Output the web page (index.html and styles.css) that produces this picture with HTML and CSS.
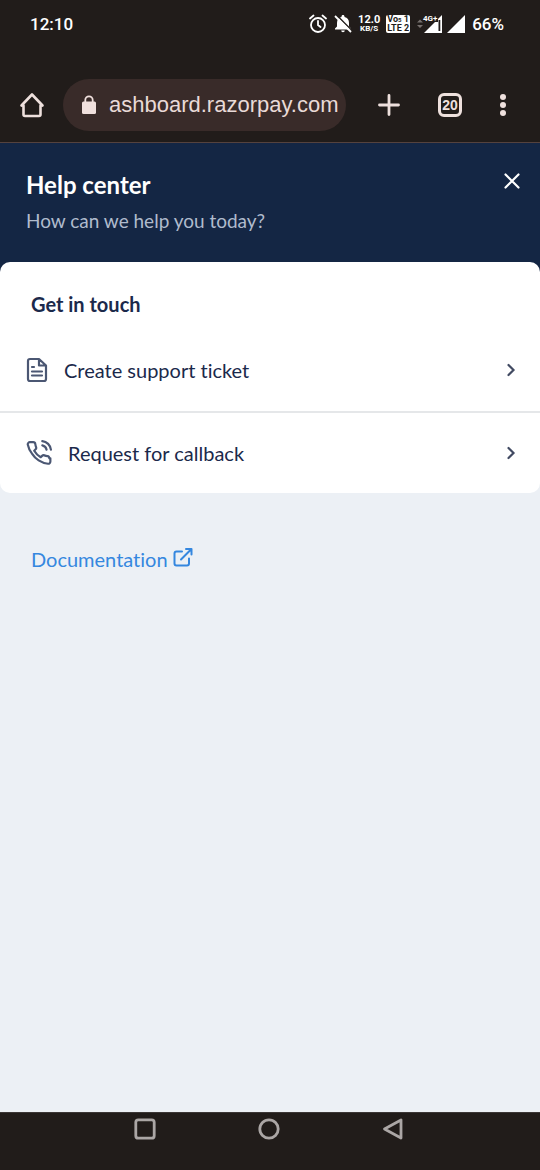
FILE: index.html
```html
<!DOCTYPE html>
<html lang="en">
<head>
<meta charset="utf-8">
<meta name="viewport" content="width=device-width, initial-scale=1">
<title>Help center</title>
<link rel="stylesheet" href="styles.css">
</head>
<body>
<div class="screen">
  <div class="status">
    <time class="clock">12:10</time>
    <div class="indicators">
      <svg width="18" height="20" viewBox="0 0 18 20" fill="none" stroke="#fff" stroke-linecap="round"><circle cx="9" cy="11" r="7" stroke-width="1.800"/><path d="M9 7v4l2.500 2M1 4.500l3.500-3M17 4.500l-3.500-3" stroke-width="1.800"/></svg>
      <svg width="18" height="18" viewBox="0 0 18 18"><path fill="#fff" d="M9 0c.9 0 1.500.6 1.500 1.500v.6C13.500 2.700 15 5 15 8v3.500l2 2v1H1v-1l2-2V8c0-3 1.500-5.300 4.500-5.900v-.6C7.500.6 8.100 0 9 0zM7.200 15.500h3.600a1.800 1.800 0 0 1-3.600 0z"/><path d="M2.800 .3l15 15" stroke="#211c1a" stroke-width="1.500"/><path d="M1 1l16 16" stroke="#fff" stroke-width="1.800"/></svg>
      <div class="rate"><span class="rate-value">12.0</span><span>KB/S</span></div>
      <div class="volte"><span>Vo<small>5</small> 1</span><span>LTE 2</span></div>
      <div class="signals">
        <svg width="26" height="20" viewBox="0 0 26 20"><path fill="#77716f" d="M0 8.500l3-3 3 3zM0 11h6l-3 3z"/><path fill="#fff" d="M7 19L25 1v18z"/><path fill="#211c1a" d="M6 0h15v8H6zM21.500 6h1.800v11h-1.800z"/><text x="6" y="7" class="network">4G+</text></svg>
        <svg width="18" height="20" viewBox="0 0 18 20"><path fill="#fff" d="M0 19L18 1v18z"/></svg>
      </div>
      <span class="battery">66%</span>
    </div>
  </div>
  <div class="browser">
    <button class="tool" aria-label="Home"><svg width="26" height="26" viewBox="0 0 26 26" fill="none" stroke="#eee0dd" stroke-width="2.600" stroke-linecap="round" stroke-linejoin="round"><path d="M2.500 13.500L13 2.500l10.500 11M4.500 13.500v9q0 1.500 1.500 1.500h14q1.500 0 1.500-1.500v-9"/></svg></button>
    <label class="address">
      <svg width="16" height="20" viewBox="0 0 16 20"><rect x="1" y="6.500" width="14" height="12.500" rx="1.500" fill="#f0e0dd"/><path d="M4.300 8V5a3.700 3.700 0 0 1 7.400 0v3" fill="none" stroke="#f0e0dd" stroke-width="1.800"/></svg>
      <input class="url" type="text" aria-label="Address" value="ashboard.razorpay.com" readonly>
    </label>
    <div class="tools">
      <button class="tool" aria-label="New tab"><svg width="22" height="22" viewBox="0 0 22 22" stroke="#eee0dd" stroke-width="2.800" stroke-linecap="round"><path d="M11 1.500v19M1.500 11h19"/></svg></button>
      <button class="tool tabs" aria-label="Switch tabs">20</button>
      <button class="tool" aria-label="Menu"><svg width="6" height="22" viewBox="0 0 6 22" fill="#eee0dd"><circle cx="3" cy="3" r="3"/><circle cx="3" cy="11" r="3"/><circle cx="3" cy="19" r="3"/></svg></button>
    </div>
  </div>
  <main class="page">
    <header class="header">
      <div>
        <h1 class="title">Help center</h1>
        <p class="subtitle">How can we help you today?</p>
      </div>
      <button class="close" aria-label="Close"><svg width="16" height="16" viewBox="0 0 16 16" stroke="#fff" stroke-width="2.200" stroke-linecap="round"><path d="M1.500 1.500l13 13M14.500 1.500l-13 13"/></svg></button>
    </header>
    <div class="card-wrap">
      <section class="card">
        <h2 class="heading">Get in touch</h2>
        <button class="row">
          <svg width="22" height="26" viewBox="0 0 22 26" fill="none" stroke="#4b5773" stroke-width="2.200" stroke-linecap="round" stroke-linejoin="round"><path d="M13 2H4Q2 2 2 4v18q0 2 2 2h14q2 0 2-2V8.500zM13 2v6.500h7M6 10h2M6 14.500h10M6 18.500h10"/></svg>
          <span class="label">Create support ticket</span>
          <svg width="10" height="14" viewBox="0 0 10 14" fill="none" stroke="#414a62" stroke-width="2.200" stroke-linecap="round"><path d="M2.500 2l5 5-5 5"/></svg>
        </button>
        <button class="row">
          <svg width="26" height="26" viewBox="0 0 24 24" fill="none" stroke="#4b5773" stroke-width="2" stroke-linecap="round" stroke-linejoin="round"><path d="M15.050 5A5 5 0 0 1 19 8.950M15.050 1A9 9 0 0 1 23 8.940M22.500 16.920v3a2 2 0 0 1-2.180 2 19.790 19.790 0 0 1-8.630-3.070 19.500 19.500 0 0 1-6-6A19.790 19.790 0 0 1 1.620 4.180 2 2 0 0 1 3.610 2h3a2 2 0 0 1 2 1.720c.13.960.36 1.900.7 2.810a2 2 0 0 1-.45 2.110L7.590 9.910a16 16 0 0 0 6 6l1.270-1.270a2 2 0 0 1 2.110-.45c.91.34 1.850.57 2.810.7a2 2 0 0 1 1.720 2.030z"/></svg>
          <span class="label">Request for callback</span>
          <svg width="10" height="14" viewBox="0 0 10 14" fill="none" stroke="#414a62" stroke-width="2.200" stroke-linecap="round"><path d="M2.500 2l5 5-5 5"/></svg>
        </button>
      </section>
    </div>
    <a class="docs" href="#documentation">Documentation
      <svg width="20" height="24" viewBox="0 0 20 24" fill="none" stroke="#3587df" stroke-width="2" stroke-linecap="round" stroke-linejoin="round"><path d="M9 4.500H3.500Q1.500 4.500 1.500 6.500v10q0 2 2 2H14q2 0 2-2v-5M13 2h5.500v5.500M18.200 2.300L8 12.500"/></svg>
    </a>
  </main>
  <nav class="system">
    <button class="tool" aria-label="Recent apps"><svg width="22" height="22" viewBox="0 0 22 22" fill="none" stroke="#aba6a5" stroke-width="2.800"><rect x="1.800" y="1.800" width="18.400" height="18.400" rx="2.500"/></svg></button>
    <button class="tool" aria-label="Home screen"><svg width="22" height="22" viewBox="0 0 22 22" fill="none" stroke="#aba6a5" stroke-width="2.800"><circle cx="11" cy="11" r="9.200"/></svg></button>
    <button class="tool" aria-label="Back"><svg width="22" height="22" viewBox="0 0 22 22" fill="none" stroke="#aba6a5" stroke-width="2.800" stroke-linejoin="round"><path d="M2.500 11L19 2v18z"/></svg></button>
  </nav>
</div>
</body>
</html>
```
FILE: styles.css
```css
* { box-sizing: border-box; }
body { margin: 0; background: #211c1a; font-family: Lato, sans-serif; font-variant-ligatures: none; }
button { border: 0; padding: 0; background: none; color: inherit; font: inherit; font-variant-ligatures: none; }
svg { display: block; flex: none; }
h1, h2, p { margin: 0; }

.screen { min-height: 100vh; display: flex; flex-direction: column; }

.status {
  display: flex; align-items: center; justify-content: space-between;
  height: 48px; padding: 0 36px 0 30px;
  color: #fff; font-family: Roboto, sans-serif; font-weight: 500; font-size: 17px;
}
.indicators { display: flex; align-items: center; gap: 7px; }
.rate, .volte { display: flex; flex-direction: column; align-items: center; font-weight: 700; }
.rate { width: 20px; font-size: 8px; line-height: 8px; }
.rate-value { font-size: 11px; line-height: 10px; }
.volte {
  width: 24px; height: 18px; border-radius: 2px; line-height: 9px;
  background: #fff; color: #211c1a; font-size: 9px; white-space: nowrap;
}
.volte span { height: 9px; }
.volte small { font-size: 6px; line-height: 6px; }
.signals { display: flex; gap: 4px; }
.network { font-size: 8px; font-weight: 700; fill: #fff; }

.browser {
  display: flex; align-items: center;
  height: 94px; padding: 20px 34px 0 19px;
  color: #eee0dd;
}
.tool { display: flex; align-items: center; justify-content: center; }
.address {
  display: flex; align-items: center; flex: 1; min-width: 0; gap: 12px;
  height: 52px; margin-left: 18px; padding: 0 6px 0 18px;
  border-radius: 26px; background: #392b29;
}
.url {
  flex: 1; min-width: 0; border: 0; padding: 0; outline: 0;
  background: none; color: #e9dad7;
  font-family: "Liberation Sans", Arial, sans-serif; font-size: 22px;
}
.tools { display: flex; align-items: center; gap: 38px; margin-left: 32px; }
.tabs {
  width: 24px; height: 24px; border: 3px solid #eee0dd; border-radius: 6px;
  font-family: "Liberation Sans", Arial, sans-serif; font-weight: 700; font-size: 14px;
}

.page { flex: 1; background: #ecf0f5; border-top: 1px solid #55423e; border-bottom: 1px solid #3b3635; }
.header {
  display: flex; justify-content: space-between; align-items: flex-start;
  padding: 26px 20px 27px 26px; background: #142644; color: #fff;
}
.title { font-size: 24px; line-height: 32px; font-weight: 700; }
.subtitle { margin-top: 6px; font-size: 19px; line-height: 28px; color: #b0bbcd; }
.close { margin-top: 4px; }
.card-wrap { background: linear-gradient(#142644 50%, #ecf0f5 50%); }
.card { border-radius: 10px; background: #fff; color: #1b294b; }
.heading { padding: 28px 31px 11px; font-size: 20px; line-height: 28px; font-weight: 700; }
.row {
  display: flex; align-items: center; width: 100%; height: 82px;
  padding: 0 24px 0 26px; font-size: 20px; text-align: left;
}
.row + .row { border-top: 2px solid #e5e7e9; }
.label { flex: 1; margin-left: 16px; }
.docs {
  display: inline-flex; align-items: center; gap: 5px;
  margin: 50px 31px; color: #3587df; font-size: 20px; line-height: 32px; text-decoration: none;
}

.system {
  display: flex; justify-content: space-between;
  height: 57px; padding: 5px 136px 0 134px;
}
.system .tool { height: 22px; }
```
